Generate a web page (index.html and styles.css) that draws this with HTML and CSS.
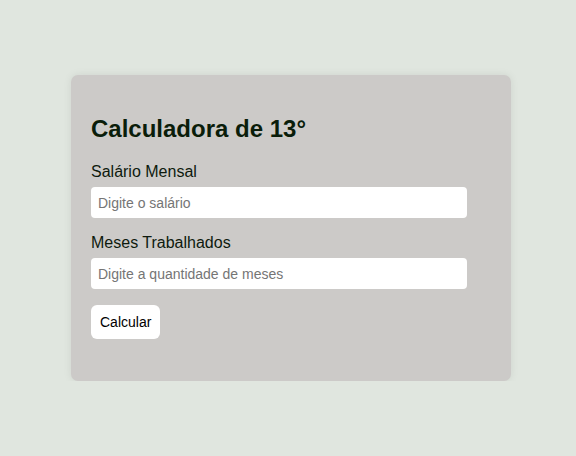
FILE: index.html
```html
<!DOCTYPE html>
<html lang="pt-BR">
<head>
<meta charset="utf-8">
<title>Calculadora de 13°</title>
<link rel="stylesheet" href="styles.css">
</head>
<body>
<main class="card">
  <h2 class="title">Calculadora de 13°</h2>
  <label class="label" for="salario">Salário Mensal</label>
  <input class="field" id="salario" type="text" placeholder="Digite o salário">
  <label class="label" for="meses">Meses Trabalhados</label>
  <input class="field" id="meses" type="text" placeholder="Digite a quantidade de meses">
  <button class="btn" type="button">Calcular</button>
</main>
</body>
</html>
```

FILE: styles.css
```css
html, body {
  margin: 0;
  padding: 0;
}
body {
  background: #e0e6df;
  font-family: "Liberation Sans", Arial, sans-serif;
  color: #0e1a0e;
  padding-top: 75px;
  padding-left: 6px;
}
.card {
  box-sizing: border-box;
  width: 440px;
  margin: 0 auto;
  background: #cccac8;
  border-radius: 7px;
  padding: 20px 20px 42px;
  box-shadow: 0 0 8px rgba(0, 0, 0, 0.08);
  display: flex;
  flex-direction: column;
  align-items: flex-start;
}
.title {
  font-size: 24px;
  font-weight: bold;
  margin: 20px 0 20px;
  color: #0a1d0a;
}
.label {
  font-size: 16px;
  margin-bottom: 6px;
}
.field {
  box-sizing: border-box;
  width: 376px;
  height: 31px;
  border: none;
  border-radius: 4px;
  padding: 0 7px;
  font-family: "Liberation Sans", Arial, sans-serif;
  font-size: 14px;
  background: #fff;
  margin-bottom: 16px;
  outline: none;
}
.field::placeholder {
  color: #757575;
}
.btn {
  height: 34px;
  padding: 0 9px;
  border: none;
  border-radius: 6px;
  background: #fff;
  font-family: "Liberation Sans", Arial, sans-serif;
  font-size: 14px;
  color: #000;
}
```
